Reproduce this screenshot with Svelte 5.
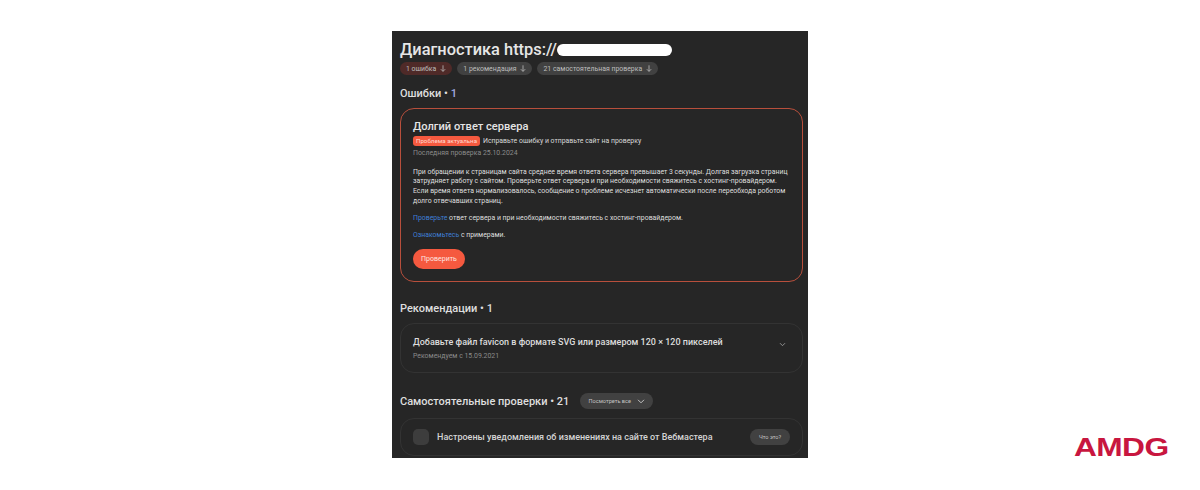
<script>
  const chips = [
    { label: "1 ошибка", tone: "chip-error" },
    { label: "1 рекомендация", tone: "" },
    { label: "21 самостоятельная проверка", tone: "" },
  ];
</script>

<div class="page">
  <main class="panel">
    <div class="heading">
      <h1>Диагностика https://</h1>
      <span class="redact"></span>
    </div>

    <div class="chips">
      {#each chips as chip}
        <span class="chip {chip.tone}">
          {chip.label}
          <svg width="6" height="7" viewBox="0 0 6 7" fill="none" stroke="currentColor" stroke-width=".8">
            <path d="M3 .3v6M.8 4.2 3 6.4l2.2-2.2" />
          </svg>
        </span>
      {/each}
    </div>

    <h2 class="section first">Ошибки • <span class="count">1</span></h2>

    <section class="card card-error">
      <h3>Долгий ответ сервера</h3>
      <div class="status">
        <span class="badge">Проблема актуальна</span>
        <span>Исправьте ошибку и отправьте сайт на проверку</span>
      </div>
      <div class="muted">Последняя проверка 25.10.2024</div>
      <p class="lead">
        При обращении к страницам сайта среднее время ответа сервера превышает 3 секунды. Долгая загрузка страниц<br />
        затрудняет работу с сайтом. Проверьте ответ сервера и при необходимости свяжитесь с хостинг-провайдером.<br />
        Если время ответа нормализовалось, сообщение о проблеме исчезнет автоматически после переобхода роботом<br />
        долго отвечавших страниц.
      </p>
      <p><a href="#check">Проверьте</a> ответ сервера и при необходимости свяжитесь с хостинг-провайдером.</p>
      <p><a href="#examples">Ознакомьтесь</a> с примерами.</p>
      <button class="check">Проверить</button>
    </section>

    <h2 class="section rec-title">Рекомендации • 1</h2>

    <section class="card card-rec">
      <div>
        <h4>Добавьте файл favicon в формате SVG или размером 120 × 120 пикселей</h4>
        <div class="muted">Рекомендуем с 15.09.2021</div>
      </div>
      <svg class="chevron" width="7" height="5" viewBox="0 0 7 5" fill="none" stroke="#9a9a9a" stroke-width=".9">
        <path d="M1 1.2 3.5 3.7 6 1.2" />
      </svg>
    </section>

    <div class="self-head">
      <h2 class="section">Самостоятельные проверки • 21</h2>
      <button class="pill">
        Посмотреть все
        <svg width="8" height="5" viewBox="0 0 8 5" fill="none" stroke="#d0d0d0" stroke-width=".9">
          <path d="M1 .8 4 3.8 7 .8" />
        </svg>
      </button>
    </div>

    <section class="card card-self">
      <span class="box"></span>
      <span class="self-text">Настроены уведомления об изменениях на сайте от Вебмастера</span>
      <button class="what">Что это?</button>
    </section>
  </main>

  <div class="logo">AMDG</div>
</div>

<style>
  :global(body) {
    background: #fff;
  }

  .page {
    position: relative;
    width: 1200px;
    height: 490px;
    padding-top: 31px;
    box-sizing: border-box;
    overflow: hidden;
    font-family: Roboto, "Noto Sans", sans-serif;
  }

  .panel {
    width: 416px;
    height: 427px;
    margin-left: 392px;
    padding: 0 5px 0 8px;
    box-sizing: border-box;
    overflow: hidden;
    background: #262626;
    color: #e4e4e4;
  }

  .heading {
    position: relative;
    padding-top: 8px;
  }

  h1 {
    margin: 0;
    font-size: 16.4px;
    line-height: 21px;
    font-weight: 500;
    color: #e6e6e6;
  }

  .redact {
    position: absolute;
    left: 157px;
    top: 13px;
    width: 115px;
    height: 12px;
    border-radius: 6px;
    background: #fff;
  }

  .chips {
    display: flex;
    gap: 5px;
    margin-top: 2px;
  }

  .chip {
    display: flex;
    align-items: center;
    gap: 4px;
    height: 13px;
    padding: 0 6px;
    border-radius: 7px;
    background: #414141;
    color: #bdbdbd;
    font-size: 6.9px;
    white-space: nowrap;
  }

  .chip-error {
    background: #4f2a28;
  }

  h2.section {
    margin: 0;
    font-size: 11px;
    line-height: 15px;
    font-weight: 500;
    color: #dedede;
  }

  .first {
    margin-top: 10px;
    padding-top: 11px;
  }

  .count {
    color: #a3abe0;
  }

  .card {
    box-sizing: border-box;
    border: 1px solid #333;
    border-radius: 14px;
    width: 403px;
  }

  .card-error {
    height: 174px;
    margin-top: 7px;
    padding: 11px 12px 0;
    border-color: #b84f3c;
    font-size: 7px;
    color: #dedede;
  }

  h3 {
    margin: 0;
    font-size: 11.1px;
    line-height: 14px;
    font-weight: 500;
    color: #e4e4e4;
  }

  .status {
    display: flex;
    align-items: center;
    gap: 3px;
    margin-top: 2px;
    font-size: 6.9px;
    color: #d8d8d8;
  }

  .badge {
    display: block;
    width: 67px;
    height: 10px;
    line-height: 10px;
    text-align: center;
    border-radius: 3px;
    background: #f5593f;
    color: #ffd9d2;
    font-size: 6.2px;
  }

  .muted {
    margin-top: 3px;
    font-size: 6.9px;
    line-height: 9px;
    color: #8a8a8a;
  }

  p {
    margin: 7.5px 0 0;
    font-size: 6.9px;
    line-height: 9.7px;
    white-space: nowrap;
  }

  .lead {
    margin-top: 9.5px;
  }

  a {
    color: #3f7fd6;
    text-decoration: none;
  }

  .check {
    display: block;
    width: 52px;
    height: 20px;
    margin-top: 8.5px;
    padding: 0;
    border: 0;
    border-radius: 10px;
    background: #f5593f;
    color: #ffe6e0;
    font: inherit;
    font-size: 7px;
  }

  .rec-title {
    margin-top: 19px;
    padding-top: 19px;
  }

  .card-rec {
    display: flex;
    justify-content: space-between;
    align-items: flex-start;
    height: 50px;
    margin-top: 7px;
    padding: 12px 16px 0 12px;
  }

  h4 {
    margin: 0;
    font-size: 9px;
    line-height: 12px;
    font-weight: 500;
    color: #dcdcdc;
  }

  .card-rec .muted {
    margin-top: 4px;
  }

  .chevron {
    margin-top: 6px;
  }

  .self-head {
    display: flex;
    align-items: center;
    gap: 11px;
    margin-top: 20px;
    height: 16px;
  }

  .pill {
    display: flex;
    align-items: center;
    justify-content: center;
    gap: 6px;
    width: 73px;
    height: 16px;
    padding: 0;
    border: 0;
    border-radius: 8px;
    background: #414141;
    color: #c4c4c4;
    font: inherit;
    font-size: 5.6px;
  }

  .card-self {
    display: flex;
    align-items: center;
    height: 38px;
    margin-top: 9px;
    padding: 0 12px;
  }

  .box {
    width: 16px;
    height: 16px;
    border-radius: 5px;
    background: #3d3d3d;
  }

  .self-text {
    margin-left: 8px;
    flex: 1;
    font-size: 9px;
    font-weight: 500;
    color: #d4d4d4;
  }

  .what {
    width: 40px;
    height: 16px;
    padding: 0;
    border: 0;
    border-radius: 8px;
    background: #414141;
    color: #c4c4c4;
    font: inherit;
    font-size: 5.6px;
  }

  .logo {
    position: absolute;
    left: 1074px;
    top: 432px;
    font-family: "Liberation Sans", Arial, sans-serif;
    font-size: 26px;
    line-height: 30px;
    font-weight: 700;
    color: #c8163f;
    transform: scaleX(1.22);
    transform-origin: left center;
    letter-spacing: -0.5px;
  }
</style>
